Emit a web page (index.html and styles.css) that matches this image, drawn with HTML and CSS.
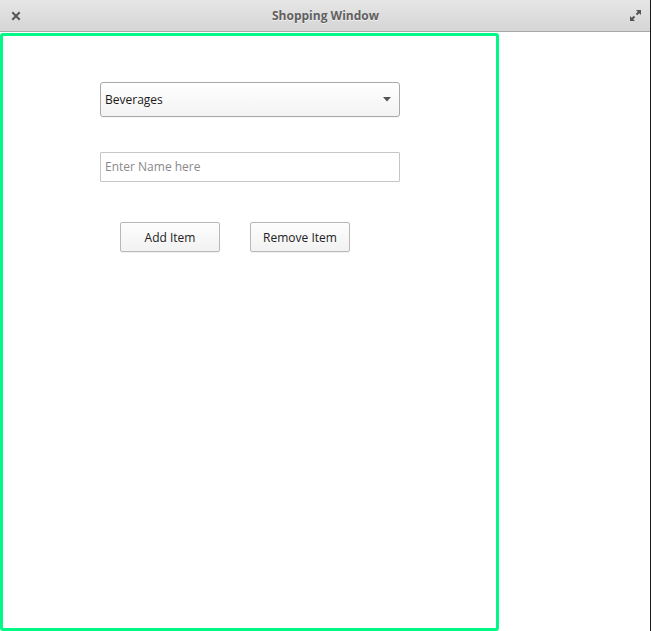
FILE: index.html
```html
<!DOCTYPE html>
<html>
<head>
<meta charset="utf-8">
<link rel="stylesheet" href="styles.css">
</head>
<body>
<div class="window">
  <div class="titlebar">
    <span class="tb-btn close">
      <svg width="10" height="10" viewBox="0 0 10 10"><path d="M2 2 L8 8 M8 2 L2 8" stroke="#555" stroke-width="2" stroke-linecap="square"/></svg>
    </span>
    <span class="title">Shopping Window</span>
    <span class="tb-btn max">
      <svg width="13" height="13" viewBox="0 0 13 13"><path d="M7 1 H12 V6 Z M1 7 V12 H6 Z" fill="#555"/><path d="M10 3 L7.5 5.5 M3 10 L5.5 7.5" stroke="#555" stroke-width="2"/></svg>
    </span>
  </div>
  <div class="content">
    <div class="panel">
      <div class="select">
        <span>Beverages</span>
        <svg width="8" height="5" viewBox="0 0 8 5"><path d="M0 0 H8 L4 4.5 Z" fill="#555"/></svg>
      </div>
      <input class="entry" type="text" placeholder="Enter Name here">
      <div class="buttons">
        <button class="btn">Add Item</button>
        <button class="btn">Remove Item</button>
      </div>
    </div>
  </div>
</div>
</body>
</html>
```
FILE: styles.css
```css
* { box-sizing: border-box; }
html, body { margin: 0; padding: 0; }
body {
  width: 651px;
  height: 631px;
  overflow: hidden;
  background: #fff;
  font-family: "Open Sans", "Noto Sans", sans-serif;
}
.window {
  width: 651px;
  height: 631px;
  display: flex;
  flex-direction: column;
  border-right: 1px solid #1a1a1a;
}
.titlebar {
  height: 32px;
  flex: none;
  display: flex;
  align-items: center;
  justify-content: space-between;
  padding: 0 8px 0 9px;
  background: linear-gradient(#e6e6e6, #d5d5d5);
  border-bottom: 1px solid #a8a8a8;
}
.tb-btn { width: 13px; height: 13px; display: flex; align-items: center; justify-content: center; }
.title {
  font-size: 12px;
  font-weight: 700;
  color: #616161;
  text-shadow: 0 1px 0 rgba(255,255,255,0.6);
  margin-top: -1px;
}
.content {
  flex: 1;
  display: flex;
  padding-top: 1px;
}
.panel {
  width: 499px;
  height: 598px;
  border: 3px solid #00f986;
  border-radius: 3px;
  display: flex;
  flex-direction: column;
  padding: 46px 0 0 97px;
}
.select {
  width: 300px;
  height: 35px;
  border: 1px solid #a9a9a9;
  border-radius: 3px;
  background: linear-gradient(#ffffff, #f3f3f3);
  display: flex;
  align-items: center;
  justify-content: space-between;
  padding: 0 8px 1px 4px;
  font-size: 12px;
  color: #1a1a1a;
  box-shadow: 0 1px 0 rgba(0,0,0,0.04);
}
.entry {
  margin: 35px 0 0 0;
  width: 300px;
  height: 30px;
  border: 1px solid #c6c6c6;
  border-radius: 1px;
  padding: 0 4px 2px 4px;
  font-family: inherit;
  font-size: 12px;
  color: #333;
  background: #fff;
  outline: none;
}
.entry::placeholder { color: #8a8a8a; }
.buttons {
  margin: 40px 0 0 20px;
  display: flex;
  gap: 30px;
}
.btn {
  width: 100px;
  height: 30px;
  border: 1px solid #b8b8b8;
  border-radius: 2px;
  background: linear-gradient(#fdfdfd, #f2f2f2);
  font-family: inherit;
  font-size: 12px;
  color: #222;
  padding: 0;
  box-shadow: 0 1px 1px rgba(0,0,0,0.06);
}
```
